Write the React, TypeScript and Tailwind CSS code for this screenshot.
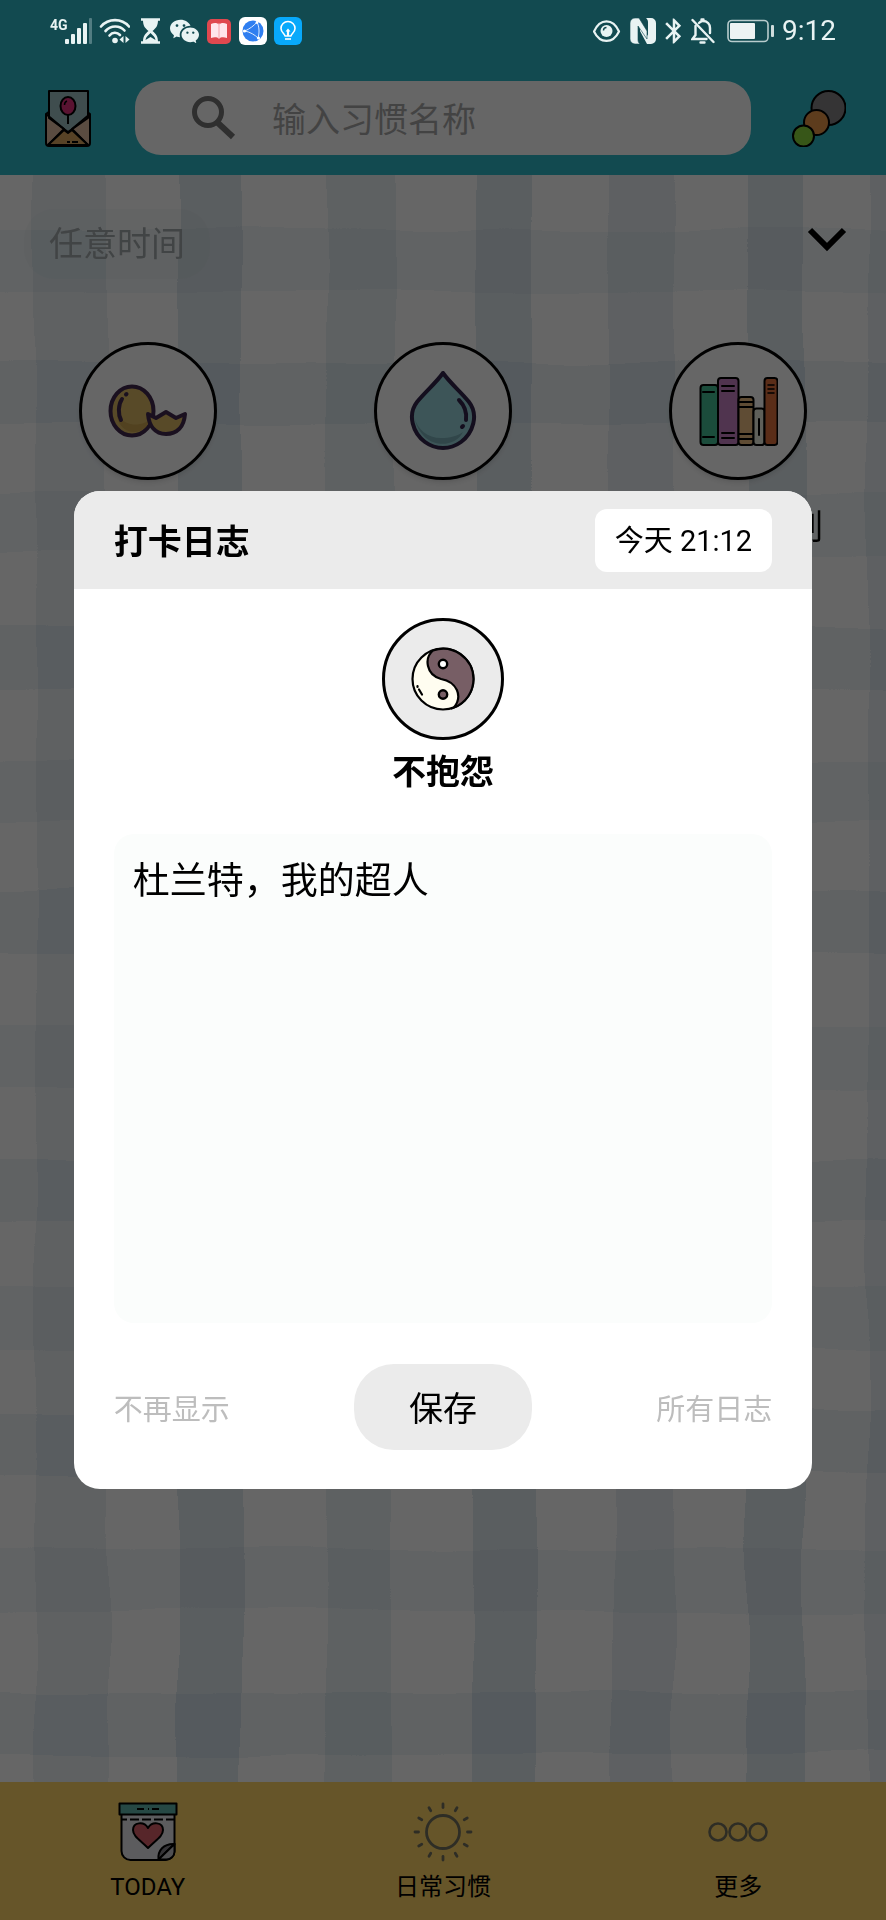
import React, { useState } from 'react';
import { BsWechat } from 'react-icons/bs';
import { MdBluetooth } from 'react-icons/md';

interface Habit {
    id: string;
    title: string;
    caption?: string;
    icon: React.ReactNode;
}

interface Tab {
    id: string;
    label: string;
    icon: React.ReactNode;
}

/* ---------- status bar ---------- */

const SignalIcon = () => (
    <svg width="27" height="26" viewBox="0 0 27 26" fill="#e9f3f3">
        <rect x="0" y="21" width="4" height="5" rx="1" />
        <rect x="6" y="16" width="4" height="10" rx="1" />
        <rect x="12" y="10" width="4" height="16" rx="1" />
        <rect x="18" y="5" width="4" height="21" rx="1" />
        <rect x="24" y="0" width="3" height="26" rx="1" opacity="0.3" />
    </svg>
);

const WifiIcon = () => (
    <svg width="31" height="26" viewBox="0 0 31 26" fill="none" stroke="#e9f3f3" strokeWidth="2.6" strokeLinecap="round">
        <path d="M2 8.500C9.500 0 22.500 0 30 8.500" />
        <path d="M6.500 13C12 7 20.500 7 25.500 12.500" />
        <path d="M10.500 17.500C13.500 14 18 14 21 17" />
        <circle cx="16" cy="22.500" r="2.800" fill="#e9f3f3" stroke="none" />
        <path d="M24.500 18v7l-4-3.500zM26.500 18v7l4-3.500z" fill="#e9f3f3" stroke="none" />
    </svg>
);

const HourglassIcon = () => (
    <svg width="26" height="26" viewBox="0 0 26 26">
        <path d="M4 1.500h19M4 24.500h19" stroke="#e9f3f3" strokeWidth="2.400" />
        <path d="M6 2h15c0 6-2 8-5.500 11C19 16 21 18 21 24H6c0-6 2-8 5.500-11C8 10 6 8 6 2z" fill="#e9f3f3" />
        <path d="M8.500 22c.5-3 2-4 5-7 3 3 4.500 4 5 7l-5-3z" fill="#124a50" />
    </svg>
);

const ReaderAppIcon = () => (
    <svg width="26" height="26" viewBox="0 0 26 26">
        <rect x="1" y="1" width="24" height="25" rx="5" fill="#e0484f" />
        <path d="M5 6c3-1.500 6-1.500 8 .5 2-2 5-2 8-.5v14c-3-1-6-1-8 .5-2-1.500-5-1.500-8-.5z" fill="#ffe6ec" />
        <path d="M13 5v16" stroke="#f4a6ae" strokeWidth="1" />
    </svg>
);

const BrowserAppIcon = () => (
    <svg width="28" height="28" viewBox="0 0 28 28">
        <rect width="28" height="28" rx="6" fill="#fff" />
        <circle cx="14" cy="14" r="10.500" fill="#2f7ef0" />
        <g fill="none" stroke="#dcebff" strokeWidth="1">
            <path d="M6 14C10 12 15 9 18 5" />
            <path d="M6 14c5 1 10 4 13 7" />
            <path d="M18 5c2.500 5 2.500 11 1 16" />
        </g>
        <circle cx="5.500" cy="14" r="1.600" fill="#fff" />
        <circle cx="18" cy="5.500" r="1.400" fill="#fff" />
        <circle cx="19.500" cy="21" r="1.600" fill="#fff" />
    </svg>
);

const BulbAppIcon = () => (
    <svg width="28" height="28" viewBox="0 0 28 28">
        <rect width="28" height="28" rx="6" fill="#08a9fb" />
        <g fill="none" stroke="#fff" strokeWidth="1.600" strokeLinejoin="round">
            <path d="M11 19c0-2-4-3.500-4-7.500a7 7 0 0 1 14 0c0 4-4 5.500-4 7.500z" />
            <path d="M11 22h6" />
            <path d="M14 19v-5" strokeWidth="2.200" />
        </g>
        <path d="M11.500 14.500h5L14 11.500z" fill="#fff" />
    </svg>
);

const EyeIcon = () => (
    <svg width="30" height="26" viewBox="0 0 30 26">
        <path d="M1 13.500C7 0 20 0 26 13.500 20 26 7 26 1 13.500z" fill="none" stroke="#e9f3f3" strokeWidth="2.200" strokeLinejoin="round" />
        <circle cx="13.500" cy="13" r="6" fill="#e9f3f3" />
        <path d="M10.500 12.500a3 3 0 0 1 3-3" fill="none" stroke="#124a50" strokeWidth="1.400" />
    </svg>
);

const NfcIcon = () => (
    <svg width="27" height="26" viewBox="0 0 27 26" fill="#e9f3f3">
        <path d="M21 26h-4L10 13V5l8 13V4c0-2-1-3-2-4h5a5 5 0 0 1 5 5v16a5 5 0 0 1-5 5z" />
        <path d="M5 0h4l8 13v8L8 8v14c0 2 1 3 2 4H5a5 5 0 0 1-5-5V5a5 5 0 0 1 5-5z" stroke="#124a50" strokeWidth="0.600" />
    </svg>
);

const BellOffIcon = () => (
    <svg width="27" height="26" viewBox="0 0 27 26" fill="none" stroke="#e9f3f3" strokeWidth="2.400" strokeLinecap="round">
        <path d="M1.500 2l21 22" />
        <path d="M4.500 8v9l-3 4h14" />
        <path d="M8 5c1-1 2-2 3.500-2 5 0 7.500 3 7.500 7v5" />
        <path d="M9.500 24.500h4M10.500 1.500h2" />
    </svg>
);

const BatteryIcon = () => (
    <svg width="50" height="24" viewBox="0 0 50 24">
        <rect x="3" y="1.500" width="40" height="21" rx="4" fill="none" stroke="#b9cccd" strokeWidth="1.600" />
        <rect x="5" y="4" width="25" height="16" rx="1" fill="#edf3f3" />
        <rect x="46" y="6" width="3" height="12" rx="1" fill="#cfdcdc" />
    </svg>
);

const StatusBar = () => (
    <div className="relative z-20 flex h-[61px] items-center justify-between px-[50px] text-[#e9f3f3]">
        <div className="flex items-center gap-[7px]">
            <div className="flex">
                <span className="w-[15px] text-[14px] leading-[14px] font-bold">4G</span>
                <SignalIcon />
            </div>
            <WifiIcon />
            <HourglassIcon />
            <BsWechat className="h-[29px] w-[29px]" />
            <ReaderAppIcon />
            <BrowserAppIcon />
            <BulbAppIcon />
        </div>
        <div className="flex items-center gap-[7px]">
            <EyeIcon />
            <NfcIcon />
            <MdBluetooth className="h-[32px] w-[20px]" viewBox="4 0 16 24" />
            <BellOffIcon />
            <BatteryIcon />
            <span className="text-[28px] leading-8">9:12</span>
        </div>
    </div>
);

/* ---------- header ---------- */

const LetterIcon = () => (
    <svg width="54" height="58" viewBox="0 0 54 58" stroke="#000" strokeWidth="2" strokeLinejoin="round">
        <path d="M6 25l4-3h36l4 3v29a3 3 0 0 1-3 3H9a3 3 0 0 1-3-3z" fill="#e0bda2" />
        <path d="M9 2h39v27L28 43 9 29z" fill="#9fc0c3" />
        <path d="M6 25l18 15L8 56M50 25L32 40l16 16" fill="none" />
        <path d="M8 56l16-15 4 3 4-3 16 15z" fill="#d9a660" />
        <path d="M28 26v9" />
        <ellipse cx="28" cy="17" rx="7.500" ry="9" fill="#e0307c" />
        <path d="M24.500 16c0-2 1-3.500 2.500-4" fill="none" strokeWidth="1.500" />
        <path d="M27 53h3M32 53h6" />
    </svg>
);

const CaterpillarIcon = () => (
    <svg width="54" height="58" viewBox="0 0 54 58" stroke="#000" strokeWidth="2">
        <circle cx="36.500" cy="19" r="17" fill="#858285" />
        <circle cx="24.500" cy="33.500" r="12.500" fill="#e8964a" />
        <circle cx="11.500" cy="47" r="10.500" fill="#8bd83c" />
    </svg>
);

const SearchIcon = () => (
    <svg width="44" height="44" viewBox="0 0 44 44" fill="none" stroke="#757575">
        <circle cx="16" cy="16" r="13.500" strokeWidth="5" />
        <path d="M26 27l15 14" strokeWidth="6" />
    </svg>
);

/* ---------- habits ---------- */

const EggIcon = () => (
    <svg width="80" height="80" viewBox="0 0 80 80" stroke="#432a4f" strokeWidth="4" strokeLinejoin="round" strokeLinecap="round">
        <ellipse cx="24" cy="40" rx="21.500" ry="24.500" fill="#dcb964" />
        <path d="M9 44c1 10 8 17 17 17 8 0 14-5 16-13-6 7-24 9-33-4z" fill="#cca550" stroke="none" />
        <path d="M14 28c-4 6-4 15-1 21" fill="none" />
        <path d="M18 23.500l.5-.5" />
        <path d="M40 43l8 4 10-6 10 6 9-4c-1 13-8 20-19 20s-17-8-18-20z" fill="#dcb964" />
    </svg>
);

const DropIcon = () => (
    <svg width="80" height="80" viewBox="0 0 80 80" stroke="#33254c" strokeWidth="4" strokeLinejoin="round" strokeLinecap="round">
        <path d="M40 2C33 12 22 21 14 31 4 44 10 62 22 71c11 8 25 8 36 0 12-9 18-27 8-40C58 21 47 12 40 2z" fill="#99d5db" />
        <path d="M11 45c3 14 14 22 27 22 9 0 16-2 22-6C52 78 18 80 11 45z" fill="#7ab0b8" stroke="none" />
        <path d="M56 29c6 6 8 12 7 20M60 55l-1 1" fill="none" />
    </svg>
);

const BooksIcon = () => (
    <svg width="80" height="80" viewBox="0 0 80 80" stroke="#000" strokeWidth="2" strokeLinejoin="round">
        <rect x="2.500" y="14" width="17.500" height="60" rx="3" fill="#45bd93" />
        <rect x="20" y="7" width="20.500" height="67" rx="3" fill="#c983c6" />
        <rect x="40.500" y="26" width="15" height="48" rx="3" fill="#eebd83" />
        <rect x="55.500" y="37.500" width="11" height="36.500" rx="3" fill="#eef0e2" />
        <rect x="66.500" y="7" width="13" height="67" rx="3" fill="#e0703e" />
        <g fill="none" strokeLinecap="round">
            <path d="M5 21h11M5 66h11" />
            <path d="M24 15h12M24 20h12M24 62h12M24 67h12" />
            <path d="M41 31h14M41 36h14M41 63h14M41 68h14" />
            <path d="M61 48v16" />
            <path d="M70 14h6M70 18h6M70 22h6" strokeWidth="1.500" />
        </g>
    </svg>
);

const ChevronIcon = () => (
    <svg width="40" height="26" viewBox="0 0 40 26" fill="none" stroke="#000" strokeWidth="6">
        <path d="M3 3l17 17L37 3" />
    </svg>
);

const YinYangIcon = () => (
    <svg width="64" height="64" viewBox="0 0 64 64" stroke="#000" strokeWidth="2.200">
        <circle cx="32" cy="32" r="30.500" fill="#fffdf0" />
        <path d="M22 3.500C13 11 15 28 30 32c16 3 22 17 13 28.500A30.500 30.500 0 0 0 62.500 32 30.500 30.500 0 0 0 22 3.500z" fill="#775e65" />
        <circle cx="32" cy="17" r="4.200" fill="#fff" strokeWidth="2.400" />
        <circle cx="32" cy="47.500" r="4.200" fill="#775e65" strokeWidth="2.400" />
        <path d="M8 42.500l3 5M6.500 39v1" fill="none" strokeLinecap="round" />
    </svg>
);

/* ---------- bottom tabs ---------- */

const CalendarIcon = () => (
    <svg width="60" height="60" viewBox="0 0 60 60" stroke="#000" strokeWidth="2" strokeLinejoin="round">
        <path d="M3.500 11h53v38a9 9 0 0 1-9 9h-35a9 9 0 0 1-9-9z" fill="#e6e6ea" />
        <rect x="1.500" y="1.500" width="57" height="11" fill="#5fb5aa" />
        <path d="M19 7h7M30 7h1M34 7h7" />
        <path d="M4 17.500h52" strokeDasharray="9 3" strokeDashoffset="4" />
        <path d="M30 46C22 38 15 34 15 28c0-8 11-9 15-2 4-7 15-6 15 2 0 6-7 10-15 18z" fill="#d9606a" />
        <path d="M40.500 57.500c-1-9 5-16 16-15.500z" fill="#85828a" />
        <path d="M40.500 57.500l16-15.500v8a8 8 0 0 1-8 7.500z" fill="#c9c8cd" />
    </svg>
);

const rays = [0, 30, 60, 90, 120, 150, 180, 210, 240, 270, 300, 330];

const SunIcon = () => (
    <svg width="60" height="60" viewBox="0 0 60 60" fill="none" stroke="#74725e" strokeWidth="2.800">
        <circle cx="30" cy="30" r="16.500" />
        {rays.map((deg) => (
            <path key={deg} d="M30 5.500V2" transform={`rotate(${deg} 30 30)`} strokeLinecap="round" />
        ))}
    </svg>
);

const MoreIcon = () => (
    <svg width="60" height="60" viewBox="0 0 60 60" fill="none" stroke="#74725e" strokeWidth="2.600">
        <circle cx="10" cy="30" r="8.500" />
        <circle cx="30" cy="30" r="8.500" />
        <circle cx="50" cy="30" r="8.500" />
    </svg>
);

/* Blue gingham cloth behind the habit list */
const columns = [
    { x: 35, w: 72, o: 0.12 },
    { x: 178, w: 63, o: 0.2 },
    { x: 326, w: 67, o: 0.13 },
    { x: 475, w: 59, o: 0.2 },
    { x: 612, w: 62, o: 0.14 },
    { x: 747, w: 57, o: 0.2 },
    { x: 867, w: 40, o: 0.14 },
];
const bands = [55, 187, 319, 452, 585, 718, 850, 985, 1112, 1236, 1375, 1517];

const Gingham = () => (
    <svg className="absolute inset-0 h-full w-full" viewBox="0 0 886 1607" preserveAspectRatio="none" aria-hidden="true">
        <defs>
            <filter id="cloth" x="0" y="0" width="100%" height="100%">
                <feTurbulence type="fractalNoise" baseFrequency="0.006" numOctaves="2" seed="4" />
                <feDisplacementMap in="SourceGraphic" scale="16" xChannelSelector="R" yChannelSelector="G" />
            </filter>
        </defs>
        <g fill="#6f9ab5" filter="url(#cloth)">
            {columns.map((c) => (
                <rect key={c.x} x={c.x} y="-20" width={c.w} height="1650" opacity={c.o} />
            ))}
            {bands.map((y, i) => (
                <rect key={y} x="-20" y={y} width="930" height="62" opacity={i % 2 ? 0.11 : 0.08} />
            ))}
        </g>
    </svg>
);

const habits: Habit[] = [
    { id: 'egg', title: '鸡蛋', icon: <EggIcon /> },
    { id: 'water', title: '喝水', icon: <DropIcon /> },
    { id: 'books', title: '阅读', caption: '阅读小计划', icon: <BooksIcon /> },
];

const tabs: Tab[] = [
    { id: 'today', label: 'TODAY', icon: <CalendarIcon /> },
    { id: 'habits', label: '日常习惯', icon: <SunIcon /> },
    { id: 'more', label: '更多', icon: <MoreIcon /> },
];

interface LogDialogProps {
    habitName: string;
    time: string;
}

const LogDialog: React.FC<LogDialogProps> = ({ habitName, time }) => {
    const [note, setNote] = useState('杜兰特，我的超人');

    return (
        <div
            role="dialog"
            aria-labelledby="log-title"
            className="w-5/6 overflow-hidden rounded-[26px] bg-white text-black"
        >
            <div className="flex h-[98px] items-center justify-between bg-[#ebebeb] px-10">
                <h2 id="log-title" className="pt-1 text-[34px] leading-[46px] font-bold">打卡日志</h2>
                <button className="h-[63px] rounded-xl bg-white px-5 pt-1 text-[29px]">{time}</button>
            </div>

            <div className="px-10 pt-[29px] pb-[39px]">
                <div className="flex flex-col items-center gap-2">
                    <div className="flex h-[122px] w-[122px] items-center justify-center rounded-full border-3 border-black bg-[#ebebeb]">
                        <YinYangIcon />
                    </div>
                    <h3 className="text-[34px] leading-[48px] font-bold">{habitName}</h3>
                </div>

                <textarea
                    aria-label="打卡日志"
                    value={note}
                    onChange={(e) => setNote(e.target.value)}
                    className="mt-[38px] block h-[489px] w-full resize-none rounded-[20px] bg-[#fbfdfc] px-[19px] py-6 text-[37px] leading-[48px] outline-none"
                />

                <div className="mt-[41px] grid grid-cols-3 items-center">
                    <button className="justify-self-start pt-2 text-[29px] text-[#bdbdbd]">不再显示</button>
                    <button className="h-[86px] w-[178px] justify-self-center rounded-[40px] bg-[#ebebeb] pt-1 text-[34px]">
                        保存
                    </button>
                    <button className="justify-self-end pt-2 text-[29px] text-[#bdbdbd]">所有日志</button>
                </div>
            </div>
        </div>
    );
};

const App: React.FC = () => {
    const [keyword, setKeyword] = useState('');
    const [activeTab, setActiveTab] = useState('today');

    return (
        <div className="relative flex min-h-screen flex-col bg-white font-['Roboto','Noto_Sans_CJK_SC',sans-serif]">
            <header className="bg-[#2db9c8]">
                <StatusBar />
                <div className="flex h-[114px] items-center gap-[41px] px-10">
                    <button aria-label="信件">
                        <LetterIcon />
                    </button>
                    <label className="flex h-[74px] min-w-0 flex-1 items-center gap-9 rounded-[26px] bg-white pl-[57px]">
                        <SearchIcon />
                        <input
                            type="text"
                            aria-label="输入习惯名称"
                            placeholder="输入习惯名称"
                            value={keyword}
                            onChange={(e) => setKeyword(e.target.value)}
                            className="min-w-0 flex-1 pt-1 text-[34px] outline-none placeholder:text-[#a8a8a8]"
                        />
                    </label>
                    <button aria-label="主题">
                        <CaterpillarIcon />
                    </button>
                </div>
            </header>

            <main className="relative flex-1">
                <Gingham />
                <div className="relative">
                    <div className="flex h-[138px] items-center justify-between pr-[39px] pl-6">
                        <h1 className="rounded-[30px] bg-[#8ca59c]/5 px-[25px] py-3 text-[34px] leading-[46px] text-[#a3aaac]">任意时间</h1>
                        <button aria-label="展开" className="pb-2">
                            <ChevronIcon />
                        </button>
                    </div>
                    <ul className="grid grid-cols-3 pt-[29px]">
                        {habits.map((habit) => (
                            <li key={habit.id} className="flex flex-col items-center gap-5">
                                <button
                                    aria-label={habit.title}
                                    className="flex h-[138px] w-[138px] items-center justify-center rounded-full border-3 border-black bg-white shadow-md"
                                >
                                    {habit.icon}
                                </button>
                                {habit.caption && (
                                    <span className="pt-1 text-[34px] leading-[46px]">{habit.caption}</span>
                                )}
                            </li>
                        ))}
                    </ul>
                </div>
            </main>

            <nav className="grid h-[138px] grid-cols-3 bg-[#ffd468]">
                {tabs.map((tab) => (
                    <button
                        key={tab.id}
                        aria-current={tab.id === activeTab ? 'page' : undefined}
                        onClick={() => setActiveTab(tab.id)}
                        className="flex flex-col items-center gap-2 pt-5 text-[24px] leading-[34px] text-black"
                    >
                        {tab.icon}
                        {tab.label}
                    </button>
                ))}
            </nav>

            <div className="absolute inset-0 z-10 flex items-center justify-center bg-black/60 pt-[60px]">
                <LogDialog habitName="不抱怨" time="今天 21:12" />
            </div>
        </div>
    );
};

export default App;
